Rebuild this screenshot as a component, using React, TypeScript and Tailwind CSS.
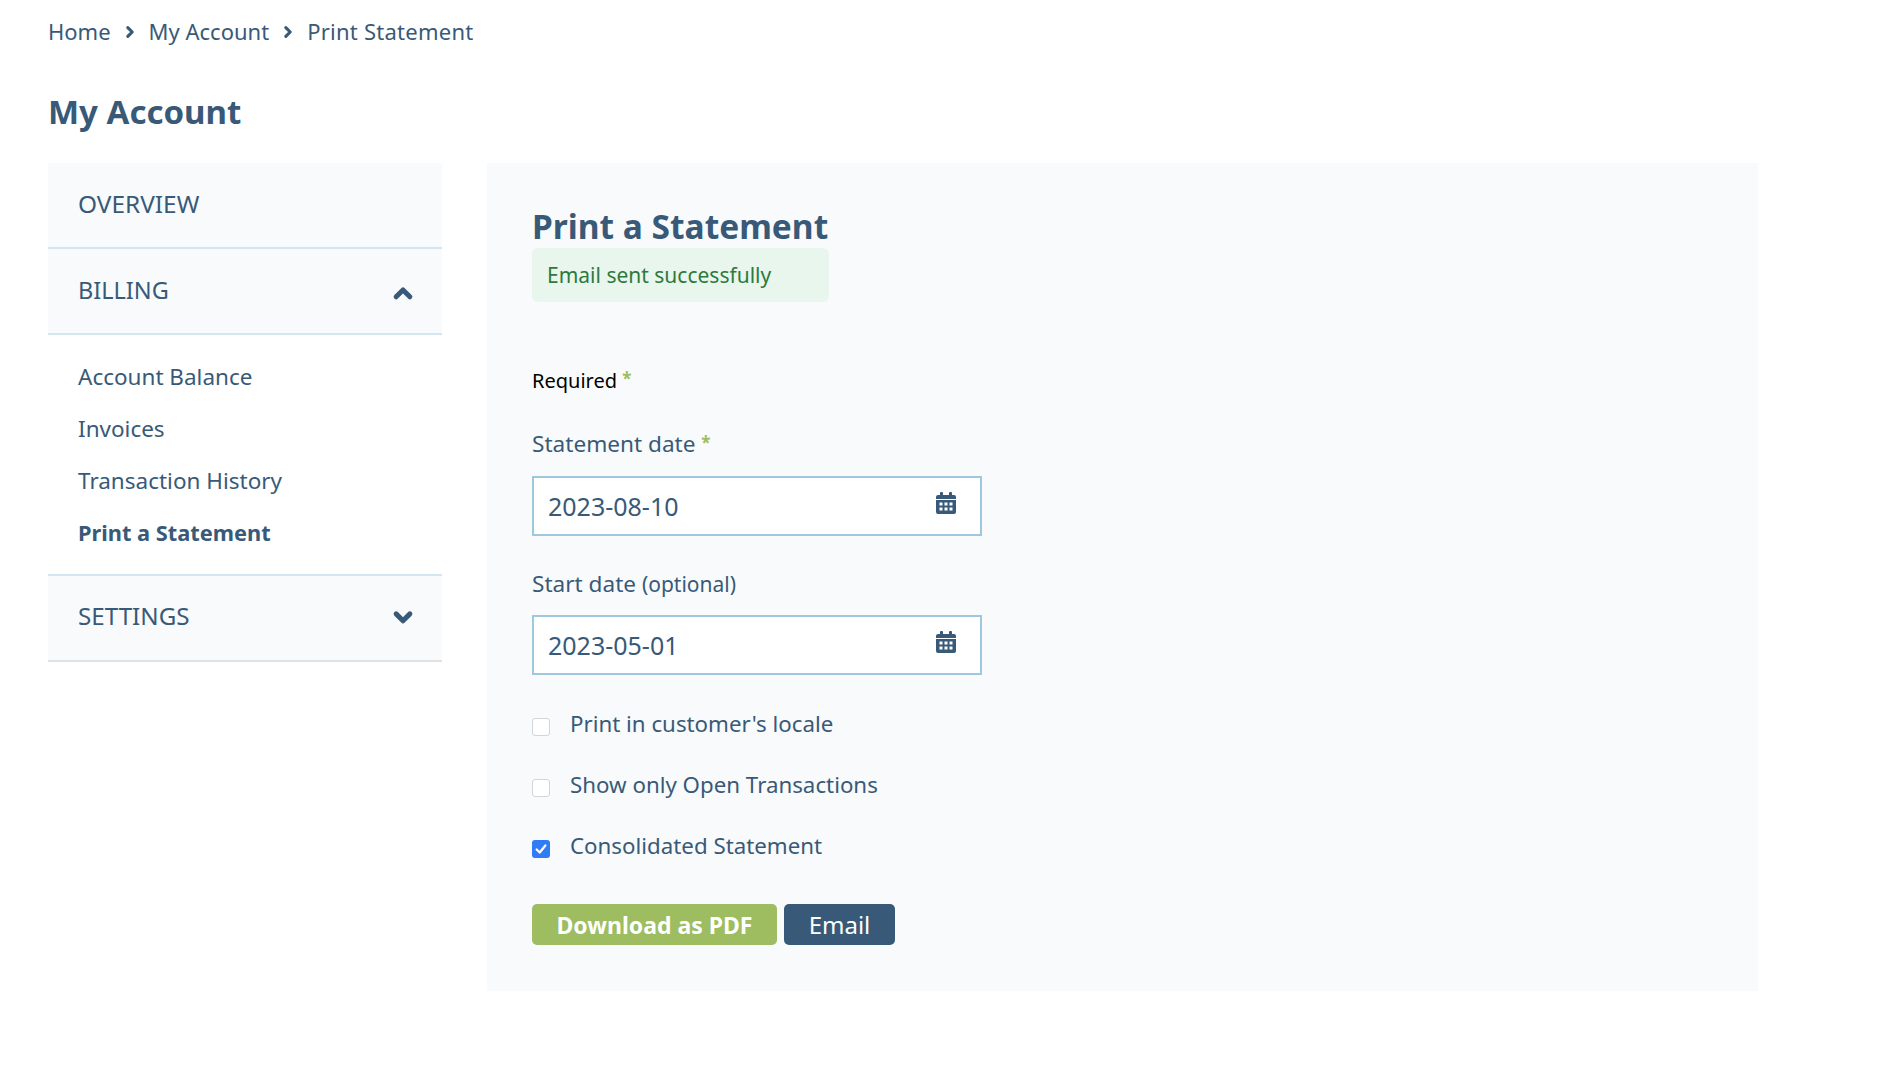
import { FC } from "react";

const Chevron: FC<{ dir: "up" | "down" | "right"; className?: string }> = ({ dir, className }) => {
  const d =
    dir === "up" ? "M3 11.500 L8 6.500 L13 11.500" : dir === "down" ? "M3 5 L8 10 L13 5" : "M5.500 3 L10.500 8 L5.500 13";
  return (
    <svg viewBox="0 0 16 16" className={className} fill="none" stroke="#385a78" strokeWidth="3.600" strokeLinecap="round" strokeLinejoin="round">
      <path d={d} />
    </svg>
  );
};

const CalendarIcon: FC = () => (
  <svg viewBox="0 0 20 22" className="w-[20px] h-[22px] absolute right-[24px] top-[14px]" fill="#385a78">
    <rect x="4" y="0" width="3" height="5" rx="1" />
    <rect x="13" y="0" width="3" height="5" rx="1" />
    <path d="M2 3h16a2 2 0 0 1 2 2v2H0V5a2 2 0 0 1 2-2z" />
    <path fillRule="evenodd" d="M0 8h20v12a2 2 0 0 1-2 2H2a2 2 0 0 1-2-2V8zm3.500 2.500v3h3v-3zm5 0v3h3v-3zm5 0v3h3v-3zm-10 5v3h3v-3zm5 0v3h3v-3zm5 0v3h3v-3z" />
  </svg>
);

const DateField: FC<{ value: string }> = ({ value }) => (
  <div className="relative w-[450px] h-[60px] border-2 border-[#9fc8de] bg-white flex items-center pl-[14px] pt-[2px] text-[25px] text-[#385a78]">
    {value}
    <CalendarIcon />
  </div>
);

const Check: FC<{ label: string; checked?: boolean }> = ({ label, checked }) => (
  <label className="flex items-start h-[61px] text-[22.300px] text-[#385a78]">
    {checked ? (
      <span className="w-[18px] h-[18px] mt-[11px] mr-[20px] rounded-[3px] bg-[#2f7cf6] flex items-center justify-center">
        <svg viewBox="0 0 16 16" className="w-[14px] h-[14px]" fill="none" stroke="#fff" strokeWidth="2.600" strokeLinecap="round" strokeLinejoin="round">
          <path d="M3 8.500 L6.500 12 L13 4" />
        </svg>
      </span>
    ) : (
      <span className="w-[18px] h-[18px] mt-[11px] mr-[20px] rounded-[3px] bg-white border border-[#d3d6d9]" />
    )}
    <span className="leading-[34px]">{label}</span>
  </label>
);

const Star: FC = () => <span className="text-[#9dbd60] align-[3px] text-[17px] font-bold leading-none">*</span>;

const App: FC = () => {
  return (
    <div className="min-h-[1082px] bg-white px-[48px] text-[#385a78] font-['Noto_Sans',sans-serif]">
      {/* breadcrumb */}
      <nav className="flex items-center h-[64px] pb-[1px] text-[22px]">
        <span>Home</span>
        <Chevron dir="right" className="w-[14px] h-[14px] mx-[12px]" />
        <span>My Account</span>
        <Chevron dir="right" className="w-[14px] h-[14px] mx-[12px]" />
        <span className="tracking-[0.25px]">Print Statement</span>
      </nav>

      <h1 className="text-[33px] font-bold leading-[48px] mt-[24px] mb-[27px]">My Account</h1>

      <div className="flex gap-[45px] items-start">
        {/* sidebar */}
        <aside className="w-[394px] text-[24.400px]">
          <div className="h-[86px] bg-[#f8fafb] border-b-2 border-[#d6e6f0] flex items-center px-[30px] pb-[2px]">OVERVIEW</div>
          <div className="h-[86px] bg-[#f8fafb] border-b-2 border-[#d6e6f0] flex items-center justify-between pl-[30px] pr-[28px] pb-[1px]">
            <span className="text-[23.500px]">BILLING</span>
            <Chevron dir="up" className="w-[22px] h-[22px] mt-[3px]" />
          </div>
          <ul className="pt-[16px] pb-[15px] px-[30px] text-[22.500px] border-b-2 border-[#d6e6f0]">
            <li className="h-[52px] flex items-center">Account Balance</li>
            <li className="h-[52px] flex items-center">Invoices</li>
            <li className="h-[52px] flex items-center">Transaction History</li>
            <li className="h-[52px] flex items-center font-bold text-[21.800px]">Print a Statement</li>
          </ul>
          <div className="h-[86px] bg-[#f8fafb] border-b-2 border-[#dfe3e6] flex items-center justify-between pl-[30px] pr-[28px] pb-[3px]">
            <span className="text-[24.200px]">SETTINGS</span>
            <Chevron dir="down" className="w-[22px] h-[22px] mt-[3px]" />
          </div>
        </aside>

        {/* panel */}
        <main className="w-[1271px] h-[828px] bg-[#f8fafb] pl-[45px] pt-[42px]">
          <h2 className="text-[33.500px] font-bold leading-[43px]">Print a Statement</h2>
          <div className="w-[297px] h-[54px] rounded-[6px] bg-[#e8f6ee] text-[#2e7a3c] text-[21px] flex items-center pl-[15px] pt-[2px]">
            Email sent successfully
          </div>

          <p className="mt-[62px] text-[20px] leading-[34px] text-black">
            Required <Star />
          </p>

          <p className="mt-[29px] mb-[15px] text-[22.600px] leading-[34px]">
            Statement date <Star />
          </p>
          <DateField value="2023-08-10" />

          <p className="mt-[31px] mb-[14px] text-[22.600px] leading-[34px]">
            Start date <span className="text-[21px]">(optional)</span>
          </p>
          <DateField value="2023-05-01" />

          <div className="mt-[32px]">
            <Check label="Print in customer's locale" />
            <Check label="Show only Open Transactions" />
            <Check label="Consolidated Statement" checked />
          </div>

          <div className="flex gap-[7px] mt-[14px]">
            <button className="w-[245px] h-[41px] rounded-[5px] bg-[#9dbd60] text-white font-bold text-[23px] pt-[2px]">Download as PDF</button>
            <button className="w-[111px] h-[41px] rounded-[5px] bg-[#385a78] text-white text-[24px] pt-[1px]">Email</button>
          </div>
        </main>
      </div>
    </div>
  );
};

export default App;
